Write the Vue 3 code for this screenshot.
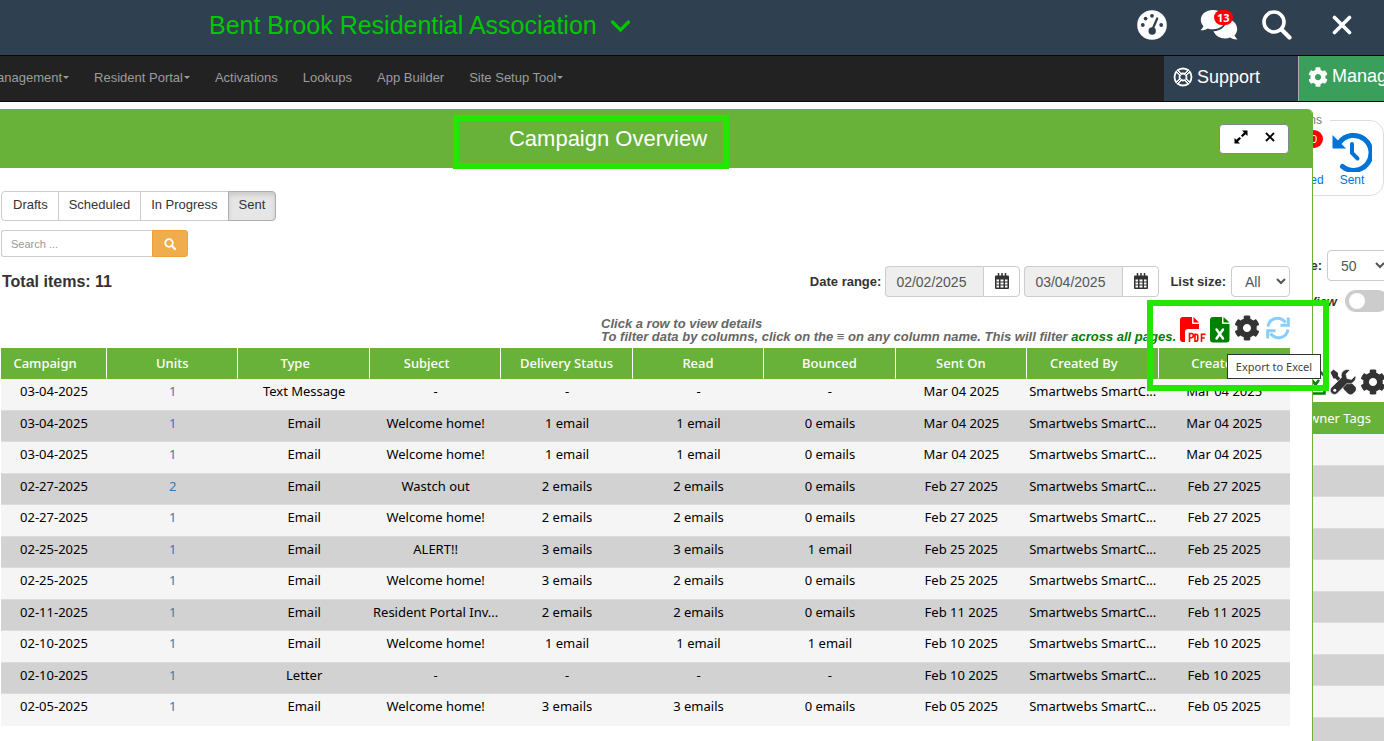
<script setup>
import { ref } from 'vue'

const gear = 'M487.4 315.7l-42.6-24.6c4.3-23.2 4.3-47 0-70.2l42.6-24.6c4.9-2.8 7.1-8.6 5.5-14-11.1-35.6-30-67.8-54.7-94.6-3.8-4.1-10-5.1-14.8-2.3L380.8 110c-17.9-15.4-38.5-27.3-60.8-35.1V25.8c0-5.6-3.9-10.5-9.4-11.7-36.7-8.2-74.3-7.8-109.2 0-5.5 1.2-9.4 6.1-9.4 11.7V75c-22.2 7.9-42.8 19.8-60.8 35.1L88.7 85.5c-4.9-2.8-11-1.9-14.8 2.3-24.7 26.7-43.6 58.9-54.7 94.6-1.7 5.4.6 11.2 5.5 14L67.3 221c-4.3 23.2-4.3 47 0 70.2l-42.6 24.6c-4.9 2.8-7.1 8.6-5.5 14 11.1 35.6 30 67.8 54.7 94.6 3.8 4.1 10 5.1 14.8 2.3l42.6-24.6c17.9 15.4 38.5 27.3 60.8 35.1v49.2c0 5.6 3.9 10.5 9.4 11.7 36.7 8.2 74.3 7.8 109.2 0 5.5-1.2 9.4-6.1 9.4-11.7v-49.2c22.2-7.9 42.8-19.8 60.8-35.1l42.6 24.6c4.9 2.8 11 1.9 14.8-2.3 24.7-26.7 43.6-58.9 54.7-94.6 1.5-5.5-.7-11.3-5.6-14.1zM256 336c-44.1 0-80-35.9-80-80s35.9-80 80-80 80 35.9 80 80-35.9 80-80 80z'

const menu = [
  { label: 'anagement', caret: true },
  { label: 'Resident Portal', caret: true },
  { label: 'Activations' },
  { label: 'Lookups' },
  { label: 'App Builder' },
  { label: 'Site Setup Tool', caret: true },
]

const tabs = ['Drafts', 'Scheduled', 'In Progress', 'Sent']
const activeTab = ref('Sent')
const search = ref('')

const dates = [
  { id: 'date-from', label: 'From date', value: '02/02/2025' },
  { id: 'date-to', label: 'To date', value: '03/04/2025' },
]

const columns = [
  { label: 'Campaign', sortable: true },
  { label: 'Units' },
  { label: 'Type', sortable: true },
  { label: 'Subject', sortable: true },
  { label: 'Delivery Status' },
  { label: 'Read' },
  { label: 'Bounced' },
  { label: 'Sent On' },
  { label: 'Created By', sortable: true },
  { label: 'Created', sortable: true },
]

const rows = [
  ['03-04-2025', '1', 'Text Message', '-', '-', '-', '-', 'Mar 04 2025'],
  ['03-04-2025', '1', 'Email', 'Welcome home!', '1 email', '1 email', '0 emails', 'Mar 04 2025'],
  ['03-04-2025', '1', 'Email', 'Welcome home!', '1 email', '1 email', '0 emails', 'Mar 04 2025'],
  ['02-27-2025', '2', 'Email', 'Wastch out', '2 emails', '2 emails', '0 emails', 'Feb 27 2025'],
  ['02-27-2025', '1', 'Email', 'Welcome home!', '2 emails', '2 emails', '0 emails', 'Feb 27 2025'],
  ['02-25-2025', '1', 'Email', 'ALERT!!', '3 emails', '3 emails', '1 email', 'Feb 25 2025'],
  ['02-25-2025', '1', 'Email', 'Welcome home!', '3 emails', '2 emails', '0 emails', 'Feb 25 2025'],
  ['02-11-2025', '1', 'Email', 'Resident Portal Inv...', '2 emails', '2 emails', '0 emails', 'Feb 11 2025'],
  ['02-10-2025', '1', 'Email', 'Welcome home!', '1 email', '1 email', '1 email', 'Feb 10 2025'],
  ['02-10-2025', '1', 'Letter', '-', '-', '-', '-', 'Feb 10 2025'],
  ['02-05-2025', '1', 'Email', 'Welcome home!', '3 emails', '3 emails', '0 emails', 'Feb 05 2025'],
].map((r) => [...r, 'Smartwebs SmartC...', r[7]])
</script>

<template>
  <div class="page">
    <header class="topbar">
      <button class="community" type="button">
        Bent Brook Residential Association
        <svg width="21" height="14" viewBox="0 0 21 14"><path d="M2.500 3l8 8 8-8" fill="none" stroke="currentColor" stroke-width="3.200" stroke-linecap="round" /></svg>
      </button>
      <div class="top-icons">
        <button type="button" aria-label="Dashboard">
          <svg width="30" height="30" viewBox="0 0 30 30">
            <circle cx="15" cy="15" r="14.800" fill="#fff" />
            <g fill="#2f4050"><circle cx="5.800" cy="15" r="1.900" /><circle cx="8.600" cy="8.600" r="1.900" /><circle cx="15" cy="5.800" r="1.900" /><circle cx="24.200" cy="15" r="1.900" /><circle cx="15.200" cy="21" r="3.700" /></g>
            <path d="M15.200 20l5-11.500" stroke="#2f4050" stroke-width="2.200" stroke-linecap="round" />
          </svg>
        </button>
        <button class="chat" type="button" aria-label="Messages">
          <svg width="38" height="32" viewBox="0 0 38 32" fill="#fff">
            <path d="M13 1C6 1 .8 5.300.8 10.800c0 2.400 1 4.600 2.600 6.300-.5 1.800-1.600 3.100-2.900 4.200 2.900.2 5.500-.7 7.300-1.900 1.600.6 3.400.9 5.200.9 7 0 12.200-4.300 12.200-9.500S20 1 13 1z" />
            <path d="M27 9.500c0 8-6.500 12.500-13.500 12.800 1.800 4.500 6.300 7.200 11.500 7.200 1.900 0 3.600-.3 5.200-.9 1.900 1.300 4.400 2.100 7.300 1.900-1.300-1.100-2.400-2.500-2.900-4.200 1.600-1.700 2.600-3.900 2.600-6.300 0-5-4.300-9.300-10.200-10.500z" />
          </svg>
          <span class="count">13</span>
        </button>
        <button type="button" aria-label="Search">
          <svg width="30" height="30" viewBox="0 0 30 30" fill="none" stroke="#fff"><circle cx="12" cy="12" r="10" stroke-width="3.600" /><path d="M19.500 19.500l8 8" stroke-width="4.200" stroke-linecap="round" /></svg>
        </button>
        <button class="quit" type="button" aria-label="Close">
          <svg width="20" height="20" viewBox="0 0 20 20"><path d="M2.500 2.500l15 15M17.500 2.500l-15 15" stroke="#fff" stroke-width="3.600" stroke-linecap="round" /></svg>
        </button>
      </div>
    </header>

    <nav class="navbar">
      <a v-for="m in menu" :key="m.label" href="#">{{ m.label }}<i v-if="m.caret" class="caret"></i></a>
      <a class="support" href="#">
        <svg width="20" height="20" viewBox="0 0 20 20" fill="none" stroke="#fff"><circle cx="10" cy="10" r="8.500" stroke-width="1.800" /><circle cx="10" cy="10" r="3.500" stroke-width="1.800" /><path d="M3.500 3.500l4 4M16.500 3.500l-4 4M3.500 16.500l4-4M16.500 16.500l-4-4" stroke-width="3.200" /><path d="M3.500 3.500l4 4M16.500 3.500l-4 4M3.500 16.500l4-4M16.500 16.500l-4-4" stroke-width="1" stroke="#2f4050" /></svg>
        Support
      </a>
      <a class="manage" href="#">
        <svg width="20" height="20" viewBox="0 0 512 512" fill="#fff"><path :d="gear" /></svg>
        Manage
      </a>
    </nav>

    <main class="content">
      <aside class="backdrop">
        <fieldset class="shortcuts">
          <legend>Options</legend>
          <a class="shortcut queued" href="#"><span class="badge">0</span>Scheduled</a>
          <a class="shortcut" href="#">
            <svg width="40" height="40" viewBox="0 0 40 40"><path d="M7.500 10.500A17.500 17.500 0 1 1 10.500 34.500" fill="none" stroke="#0073d8" stroke-width="5" stroke-linecap="round" /><path d="M.5 3v12.500q0 1 1 1H14z" fill="#0073d8" /><path d="M20 12v9l5.500 5.500" fill="none" stroke="#0073d8" stroke-width="4" stroke-linecap="round" /></svg>
            Sent
          </a>
        </fieldset>
        <div class="back-size">
          <label for="page-size">List size:</label>
          <select id="page-size"><option>50</option></select>
        </div>
        <label class="back-view">View <input type="checkbox" class="toggle" /></label>
        <div class="back-tools">
          <svg width="20" height="26" viewBox="0 0 20 26"><path d="M2 1.500h11l5.500 5.500v17.500H2z" fill="#fff" stroke="green" stroke-width="2.500" /><path d="M6 11l7 9M13 11l-7 9" stroke="green" stroke-width="2.500" /></svg>
          <svg width="26" height="26" viewBox="0 0 26 26" fill="#333">
            <path d="M.5 3.500l3-3L8 4v3l5 5-2.500 2.500-5-5h-2z" />
            <path d="M14 15l3-3c2 0 3 .5 4 1.500l4 4c1.300 1.300 1.300 3.500 0 5l-2 2c-1.300 1.300-3.500 1.300-5 0l-4-4c-1-1-1.500-3-1-4.500z" />
            <path d="M25.500 6.500L21.500 10.500l-4.500-1-1-4.500L20 1c-5-2-10 2-8.500 7.500L1.500 18.500c-1.700 1.700-1.700 4 0 5.700s4.200 1.700 5.800 0L17 14.500c5 1.500 10-3 8.500-8z" stroke="#fff" stroke-width=".6" />
            <circle cx="4.800" cy="21.200" r="1.500" fill="#fff" />
          </svg>
          <svg width="26" height="26" viewBox="0 0 512 512" fill="#333"><path :d="gear" /></svg>
        </div>
        <div class="back-head">Owner Tags</div>
        <div v-for="n in 10" :key="n" class="back-row"></div>
      </aside>

      <section class="modal" role="dialog" aria-labelledby="modal-title">
        <header class="modal-head">
          <h1 id="modal-title">Campaign Overview</h1>
          <div class="window-buttons">
            <button type="button" aria-label="Expand"><svg width="14" height="14" viewBox="0 0 14 14"><path d="M13.500.5v5.500l-1.800-1.800L8.500 7 7 5.500l3-3L8 .5zM.5 13.500V8l1.800 1.800L5.500 7 7 8.500l-3 3 2 2z" /></svg></button>
            <button type="button" aria-label="Close"><svg width="10" height="10" viewBox="0 0 10 10"><path d="M1 1l8 8M9 1L1 9" stroke="#000" stroke-width="1.800" /></svg></button>
          </div>
          <span class="marker title-marker"></span>
        </header>

        <div class="modal-body">
          <div class="tabs">
            <button v-for="t in tabs" :key="t" type="button" :class="{ active: t === activeTab }" @click="activeTab = t">{{ t }}</button>
          </div>
          <form class="search" @submit.prevent>
            <input v-model="search" type="text" placeholder="Search ..." aria-label="Search campaigns" />
            <button type="submit" aria-label="Search"><svg width="12" height="12" viewBox="0 0 12 12" fill="none" stroke="#fff"><circle cx="5" cy="5" r="3.800" stroke-width="1.800" /><path d="M8 8l3 3" stroke-width="2.200" stroke-linecap="round" /></svg></button>
          </form>

          <div class="filters">
            <strong class="total">Total items: 11</strong>
            <span class="range-label">Date range:</span>
            <div v-for="d in dates" :key="d.id" class="date">
              <input :id="d.id" type="text" readonly :value="d.value" :aria-label="d.label" />
              <button type="button" :aria-label="'Pick ' + d.label">
                <svg width="16" height="18" viewBox="0 0 16 18"><path d="M1 4.500q0-1 1-1h12q1 0 1 1v11.500q0 1-1 1H2q-1 0-1-1z" fill="#333" /><path d="M4.500 1v4M8 1v4M11.500 1v4" stroke="#333" stroke-width="1.500" /><path d="M2.500 7.500h2.500v2h-2.500zM6.500 7.500h3v2h-3zM11 7.500h2.500v2h-2.500zM2.500 10.500h2.500v2h-2.500zM6.500 10.500h3v2h-3zM11 10.500h2.500v2h-2.500zM2.500 13.500h2.500v2h-2.500zM6.500 13.500h3v2h-3zM11 13.500h2.500v2h-2.500z" fill="#fff" /></svg>
              </button>
            </div>
            <label class="size-label" for="list-size">List size:</label>
            <select id="list-size"><option>All</option></select>
          </div>

          <div class="hints">
            <p>Click a row to view details<br />To filter data by columns, click on the ≡ on any column name. This will filter <b>across all pages.</b></p>
            <div class="exports">
              <button type="button" aria-label="Export to PDF">
                <svg width="26" height="26" viewBox="0 0 26 26">
                  <path d="M3 0h9v6q0 1 1 1h6v5H8q-3 0-3 3v10H3q-3 0-3-3V3Q0 0 3 0zM13.500 0L19 5.500h-5.500z" fill="red" />
                  <path d="M9.500 25v-8.500h1.800a2 2 0 0 1 0 4.200H9.500M15 17.200v7h.8q2 0 2-2v-3q0-2-2-2zM21.500 25v-7.800h4M21.500 21h3.200" fill="none" stroke="red" stroke-width="1.600" />
                </svg>
              </button>
              <button type="button" aria-label="Export to Excel">
                <svg width="20" height="26" viewBox="0 0 20 26"><path d="M3 0h9v6q0 1 1 1h6.500v15.500q0 3-3 3H3q-3 0-3-3V3Q0 0 3 0zM13.500 0L19.500 5.500h-6z" fill="green" /><path d="M6.500 12.500l6.500 9M13 12.500l-6.500 9" stroke="#fff" stroke-width="2.400" stroke-linecap="round" /></svg>
              </button>
              <button class="gear" type="button" aria-label="Settings"><svg width="26" height="26" viewBox="0 0 512 512" fill="#333"><path :d="gear" /></svg></button>
              <button class="gear" type="button" aria-label="Refresh">
                <svg width="24" height="24" viewBox="0 0 24 24" fill="none" stroke="#87cefa" stroke-width="3"><path d="M2 10.500C3.500 1.500 14-.5 19.500 6.500M22 13.500C20.500 22.500 10 24.500 4.500 17.500" /><path d="M22.300 1.500v7.700h-7.800M1.700 22.500v-7.700h7.800" /></svg>
              </button>
            </div>
          </div>

          <table>
            <thead>
              <tr><th v-for="c in columns" :key="c.label" :class="{ sortable: c.sortable }">{{ c.label }}</th></tr>
            </thead>
            <tbody>
              <tr v-for="(r, i) in rows" :key="i">
                <td v-for="(c, j) in r" :key="j"><a v-if="j === 1" href="#">{{ c }}</a><template v-else>{{ c }}</template></td>
              </tr>
            </tbody>
          </table>
        </div>
      </section>
      <span class="marker export-marker"></span>
      <span class="tooltip" role="tooltip">Export to Excel</span>
    </main>
  </div>
</template>

<style>
html,
body {
  overflow: hidden;
}
</style>

<style scoped>
.page {
  height: 100vh;
  display: flex;
  flex-direction: column;
  overflow: hidden;
  background: #fff;
  color: #333;
  font-family: "Liberation Sans", Arial, sans-serif;
  font-size: 13px;
}
.page * {
  box-sizing: border-box;
}
button,
input,
select {
  font-family: inherit;
  font-size: 13px;
  color: inherit;
}
button {
  padding: 0;
  border: 0;
  background: none;
}
a {
  text-decoration: none;
}
svg {
  display: block;
  flex: none;
}
.topbar {
  height: 55px;
  flex: none;
  display: flex;
  justify-content: space-between;
  align-items: center;
  padding: 0 32px 4px 209px;
  background: #2f4050;
}
.community {
  display: flex;
  align-items: center;
  gap: 13px;
  color: #00c800;
  font-size: 25px;
}
.top-icons {
  display: flex;
  align-items: center;
  gap: 33px;
  margin-bottom: 2px;
}
.chat {
  position: relative;
  margin-right: -9px;
}
.quit {
  margin: 0 0 0 7px;
}
.count {
  position: absolute;
  left: 14px;
  top: 1px;
  padding: 0 3px;
  border-radius: 8px;
  background: red;
  color: #fff;
  font: bold 11px/15px "Open Sans", sans-serif;
}
.navbar {
  height: 47px;
  flex: none;
  display: flex;
  align-items: stretch;
  gap: 25px;
  border: solid #080808;
  border-width: 1px 0;
  background: #222;
  overflow: hidden;
}
.navbar a {
  display: flex;
  align-items: center;
  padding-bottom: 3px;
  color: #9d9d9d;
  white-space: nowrap;
}
.navbar a:first-child {
  margin-left: -3px;
}
.caret {
  margin-left: 1px;
  border: 3px solid transparent;
  border-top-color: currentColor;
  border-bottom: 0;
}
.navbar .support,
.navbar .manage {
  gap: 4px;
  margin: -1px 0;
  color: #fff;
  font-size: 18px;
}
.navbar .support {
  width: 135px;
  margin-left: auto;
  padding-left: 9px;
  background: #2f4050;
  border-right: 1px solid #a5adb5;
}
.navbar .manage {
  width: 85px;
  margin-left: -25px;
  padding-left: 9px;
  background: #3a9f5a;
  border-bottom: 1px solid #2f4050;
}
.content {
  position: relative;
  flex: 1;
  min-height: 0;
}
.backdrop {
  width: 134px;
  height: 100%;
  margin-left: auto;
  padding-top: 11px;
  overflow: hidden;
}
.shortcuts {
  height: 83px;
  display: flex;
  justify-content: flex-end;
  gap: 9px;
  margin: 0;
  padding: 4px 11px 0 0;
  border: 1px solid #ddd;
  border-radius: 14px;
}
.shortcuts legend {
  margin-left: auto;
  margin-right: 42px;
  padding: 0 8px 0 0;
  color: #777;
  font-size: 12px;
  line-height: 15px;
}
.shortcut {
  position: relative;
  width: 40px;
  color: #0073d8;
  font-size: 12px;
  line-height: 17px;
  text-align: center;
}
.queued {
  width: 56px;
  padding-top: 40px;
}
.badge {
  position: absolute;
  top: -2px;
  right: 0;
  width: 18px;
  border-radius: 9px;
  background: red;
  color: #fff;
  font-size: 11px;
  line-height: 18px;
}
.back-size {
  display: flex;
  align-items: center;
  justify-content: flex-end;
  gap: 5px;
  margin: 54px -5px 0 0;
  font-weight: bold;
}
select {
  height: 31px;
  padding: 0 1px 0 9px;
  border: 1px solid #ccc;
  border-radius: 4px;
  background: #fff;
  color: #555;
  font-size: 14px;
}
.back-size select {
  width: 62px;
}
.back-view {
  display: flex;
  align-items: center;
  justify-content: flex-end;
  gap: 8px;
  margin: 9px -5px 0 0;
  font-style: italic;
  font-weight: bold;
}
.toggle {
  appearance: none;
  width: 44px;
  height: 22px;
  margin: 0;
  padding: 3px 4px;
  border-radius: 11px;
  background: #ccc;
}
.toggle::before {
  content: "";
  display: block;
  width: 16px;
  height: 16px;
  border-radius: 8px;
  background: #fff;
}
.back-tools {
  display: flex;
  justify-content: flex-end;
  gap: 4px;
  margin: 57px -2px 7px 0;
}
.back-head {
  height: 32px;
  padding: 0 13px 2px 0;
  background: #69b23a;
  color: #fff;
  font: 13px/32px "Noto Sans", sans-serif;
  text-align: right;
}
.back-row {
  height: 32px;
  border-bottom: 1px solid #ddd;
  background: #f5f5f5;
}
.back-row:nth-child(odd) {
  height: 31px;
  background: #d2d2d2;
}
.modal {
  position: absolute;
  inset: 7px 71px 0 0;
  border-right: 1px solid #69b23a;
  border-radius: 0 5px 0 0;
  background: #fff;
}
.modal-head {
  position: relative;
  height: 59px;
  border-radius: 0 5px 0 0;
  background: #69b23a;
  display: flex;
  align-items: center;
  padding-right: 23px;
}
h1 {
  flex: 1;
  margin: 0;
  text-indent: -3px;
  color: #fff;
  font-size: 22px;
  font-weight: normal;
  text-align: center;
}
.window-buttons {
  display: flex;
  width: 70px;
  height: 30px;
  align-items: center;
  justify-content: center;
  gap: 17px;
  padding-bottom: 4px;
  border: 1px solid #888;
  border-radius: 4px;
  background: #fff;
}
.marker {
  position: absolute;
  border: 6px solid #25e600;
  pointer-events: none;
}
.title-marker {
  left: 453px;
  top: 6px;
  width: 276px;
  height: 54px;
}
.export-marker {
  right: 55px;
  top: 198px;
  width: 182px;
  height: 91px;
}
.tooltip {
  position: absolute;
  right: 63px;
  top: 252px;
  width: 94px;
  border: 1px solid #333;
  background: #fff;
  color: #444;
  font: 11px/23px "Noto Sans", sans-serif;
  text-align: center;
  white-space: nowrap;
}
.modal-body {
  padding: 23px 22px 0 1px;
}
.tabs {
  display: flex;
}
.tabs button {
  height: 30px;
  margin-right: -1px;
  padding: 0 10px 4px;
  border: 1px solid #ccc;
  background: #fff;
}
.tabs button:first-child {
  padding-left: 11px;
  border-radius: 4px 0 0 4px;
}
.tabs button:last-child {
  border-radius: 0 4px 4px 0;
}
.tabs .active {
  border-color: #adadad;
  background: #e6e6e6;
  box-shadow: inset 0 3px 5px rgba(0, 0, 0, 0.125);
}
.search {
  display: flex;
  margin-top: 9px;
}
.search input {
  width: 151px;
  height: 27px;
  padding: 0 9px;
  border: 1px solid #ccc;
  border-right: 0;
  border-radius: 3px 0 0 3px;
  font-size: 11px;
}
.search input::placeholder {
  color: #999;
}
.search button {
  display: flex;
  align-items: center;
  justify-content: center;
  width: 36px;
  border: 1px solid #eea236;
  border-radius: 0 3px 3px 0;
  background: #f0ad4e;
}
.filters {
  display: flex;
  align-items: center;
  margin-top: 9px;
  font-weight: bold;
}
.total {
  flex: 1;
  padding-left: 1px;
  font-size: 16px;
}
.date {
  display: flex;
  height: 31px;
  margin-left: 4px;
}
.date input {
  width: 98px;
  padding: 1px 10px 0;
  border: 1px solid #ccc;
  border-right: 0;
  border-radius: 4px 0 0 4px;
  background: #eee;
  color: #555;
  font-size: 14px;
}
.date button {
  display: flex;
  justify-content: center;
  width: 37px;
  padding-top: 5px;
  border: 1px solid #ccc;
  border-radius: 0 4px 4px 0;
}
.size-label {
  margin: 0 5px 0 11px;
}
.filters select {
  width: 59px;
}
.hints {
  display: flex;
  align-items: flex-start;
  justify-content: flex-end;
  gap: 4px;
  height: 51px;
  padding-top: 20px;
}
.hints p {
  margin: 0;
  color: #666;
  font-weight: bold;
  font-style: italic;
  line-height: 13px;
}
.hints b {
  color: green;
}
.exports {
  display: flex;
  gap: 4px;
}
.exports .gear {
  margin-top: -4px;
}
.exports .gear:last-child {
  margin-left: 2px;
}
table {
  width: 100%;
  table-layout: fixed;
  border-collapse: separate;
  border-spacing: 0;
  font-family: "Noto Sans", sans-serif;
  text-align: center;
  color: #000;
}
th {
  height: 31px;
  padding: 0;
  border-right: 1px solid #fff;
  border-bottom: 1px solid #69b23a;
  background: #69b23a;
  color: #fff;
  font-weight: 500;
}
th:first-child {
  width: 106px;
}
th:last-child {
  border-right: 0;
}
th.sortable {
  padding-right: 17px;
}
td {
  height: 32px;
  padding: 0 0 7px;
  border-bottom: 1px solid #ddd;
  background: #f5f5f5;
  line-height: 18px;
  white-space: nowrap;
}
tbody tr:nth-child(even) td {
  height: 31px;
  padding-bottom: 6px;
  background: #d2d2d2;
}
tbody tr:last-child td {
  border-bottom-color: #f5f5f5;
}
td a {
  color: #337ab7;
}
</style>
